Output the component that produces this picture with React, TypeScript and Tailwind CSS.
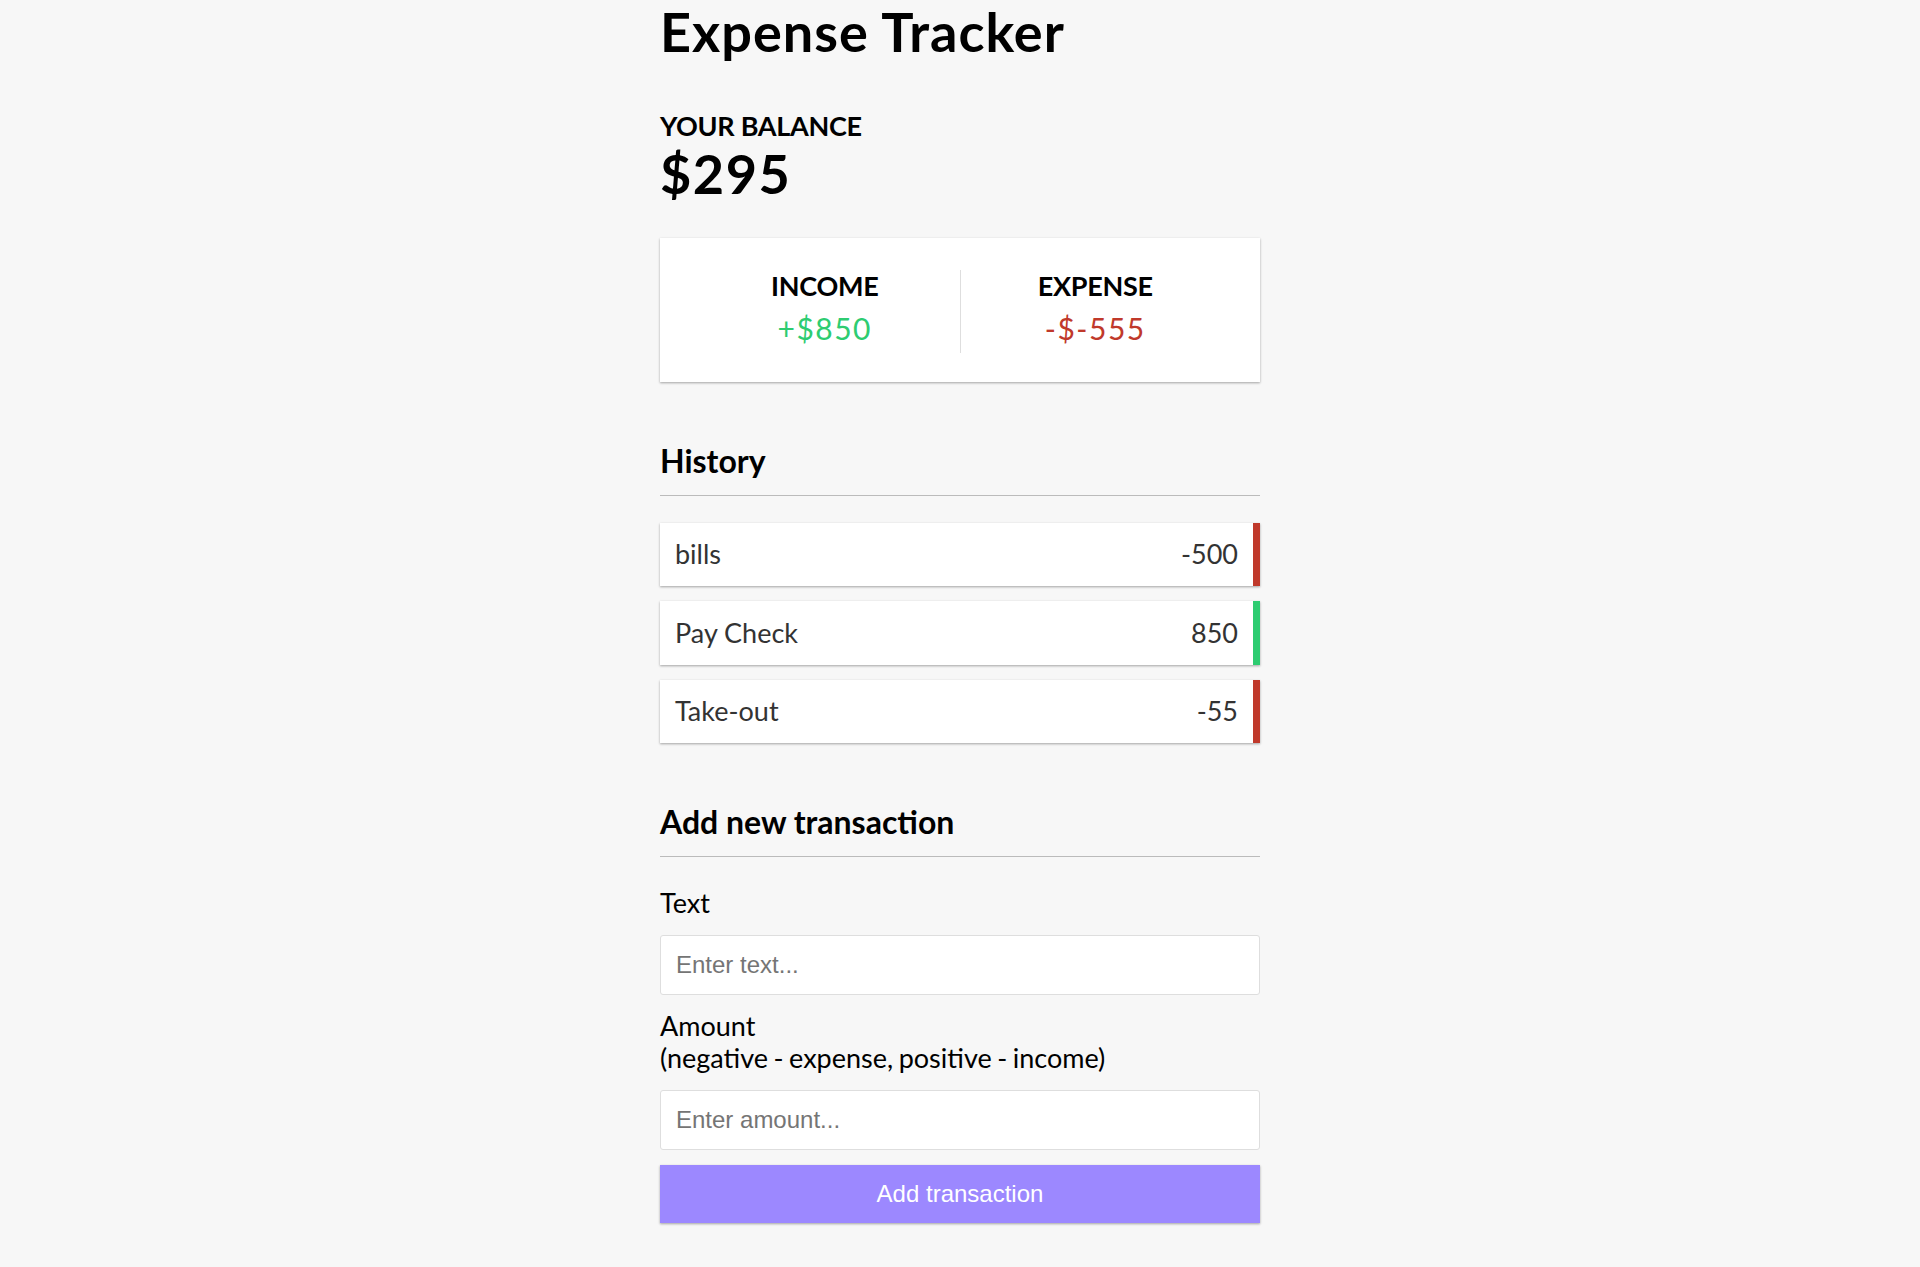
import React from "react";

type Tx = { id: number; text: string; amount: number };

const transactions: Tx[] = [
  { id: 1, text: "bills", amount: -500 },
  { id: 2, text: "Pay Check", amount: 850 },
  { id: 3, text: "Take-out", amount: -55 },
];

const shadow = "shadow-[0_1px_3px_rgba(0,0,0,0.12),0_1px_2px_rgba(0,0,0,0.24)]";

function TransactionItem({ tx }: { tx: Tx }) {
  const minus = tx.amount < 0;
  return (
    <li
      className={`flex justify-between bg-white text-[#333] px-[15px] py-[15.5px] my-[15px] border-r-[7.5px] ${
        minus ? "border-[#c0392b]" : "border-[#2ecc71]"
      } shadow-[0_1px_3px_rgba(0,0,0,0.12),0_1px_2px_rgba(0,0,0,0.24)]`}
    >
      {tx.text}
      <span>{tx.amount}</span>
    </li>
  );
}

export default function App() {
  const amounts = transactions.map((t) => t.amount);
  const total = amounts.reduce((a, b) => a + b, 0);
  const income = amounts.filter((a) => a > 0).reduce((a, b) => a + b, 0);
  const expense = amounts.filter((a) => a < 0).reduce((a, b) => a + b, 0);

  return (
    <div className="min-h-screen bg-[#f7f7f7] text-black text-[27px] leading-[1.2] font-['Lato','Noto_Sans',sans-serif]">
      <div className="mx-auto w-[600px]">
        <h1 className="text-[54px] font-bold tracking-[1px] mb-[45px]">Expense Tracker</h1>

        <h4 className="font-bold uppercase tracking-[-0.3px]">Your Balance</h4>
        <h1 className="text-[54px] font-bold tracking-[1.5px]">${total}</h1>

        <div className={`flex bg-white pt-[32px] pb-[29px] px-[30px] mt-[31px] ${shadow}`}>
          <div className="flex-1 text-center border-r border-[#dedede]">
            <h4 className="font-bold uppercase tracking-[-0.3px]">Income</h4>
            <p className="text-[30px] tracking-[1.5px] my-[7.5px] text-[#2ecc71]">+${income}</p>
          </div>
          <div className="flex-1 text-center">
            <h4 className="font-bold uppercase tracking-[-0.3px]">Expense</h4>
            <p className="text-[30px] tracking-[1.5px] my-[7.5px] text-[#c0392b]">-${expense}</p>
          </div>
        </div>

        <h3 className="mt-[60px] text-[32px] font-bold pb-[14px] border-b border-[#bbb]">History</h3>
        <ul className="mt-[27px] mb-[60px]">
          {transactions.map((tx) => (
            <TransactionItem key={tx.id} tx={tx} />
          ))}
        </ul>

        <h3 className="text-[32px] font-bold pb-[15px] border-b border-[#bbb] mb-[15px]">
          Add new transaction
        </h3>
        <form onSubmit={(e) => e.preventDefault()}>
          <div>
            <label htmlFor="text" className="inline-block my-[15px]">
              Text
            </label>
            <input
              id="text"
              type="text"
              placeholder="Enter text..."
              className="block w-full bg-white border border-[#dedede] rounded-[3px] p-[15px] text-[24px] leading-[normal] font-['Liberation_Sans',Arial,sans-serif] placeholder:text-[#757575] outline-none"
            />
          </div>
          <div>
            <label htmlFor="amount" className="inline-block my-[15px] [word-spacing:-1.4px]">
              Amount <br />
              (negative - expense, positive - income)
            </label>
            <input
              id="amount"
              type="number"
              placeholder="Enter amount..."
              className="block w-full bg-white border border-[#dedede] rounded-[3px] p-[15px] text-[24px] leading-[normal] font-['Liberation_Sans',Arial,sans-serif] placeholder:text-[#757575] outline-none"
            />
          </div>
          <button
            type="submit"
            className={`block w-full bg-[#9c88ff] text-white p-[15px] mt-[15px] mb-[45px] text-[24px] leading-[normal] font-['Liberation_Sans',Arial,sans-serif] cursor-pointer ${shadow}`}
          >
            Add transaction
          </button>
        </form>
      </div>
    </div>
  );
}
